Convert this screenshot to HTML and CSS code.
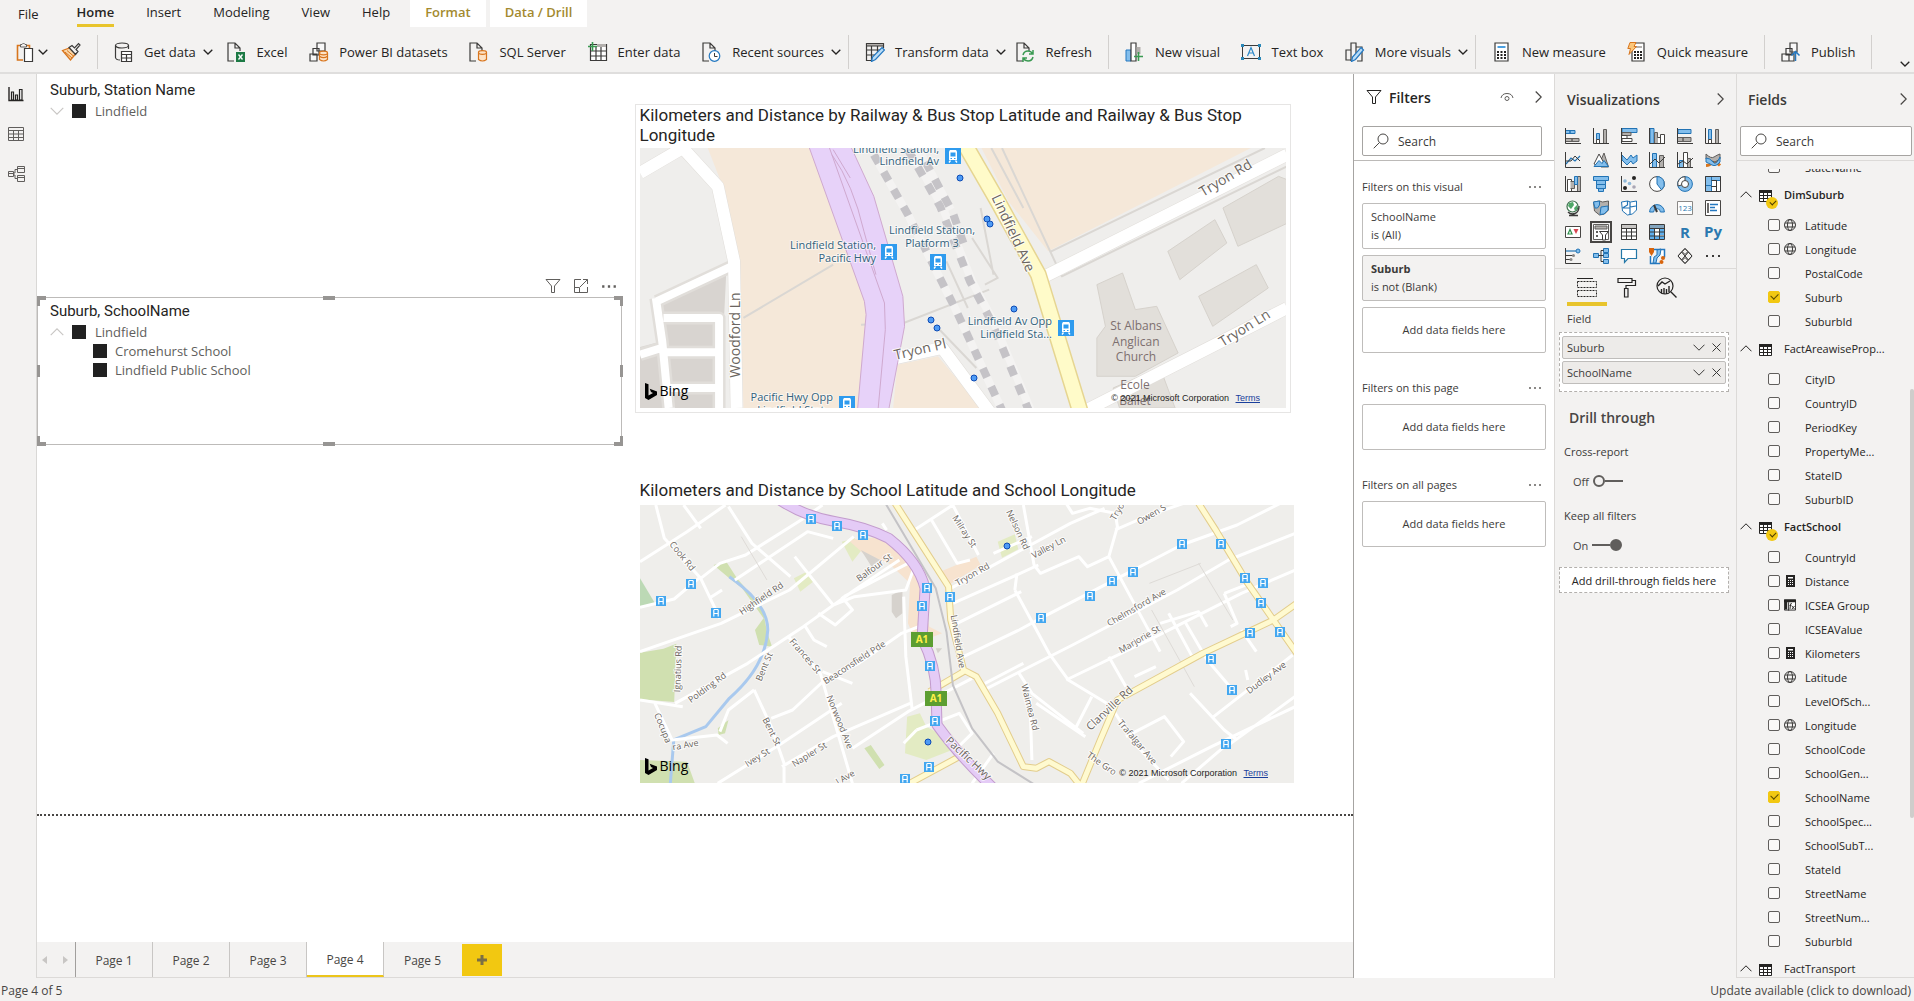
FILE: index.html
```html
<!DOCTYPE html>
<html lang="en">
<head>
<meta charset="utf-8">
<meta name="viewport" content="width=device-width, initial-scale=1">
<title>Report editor</title>
<link rel="stylesheet" href="styles.css">
</head>
<body>
<svg class="defs" aria-hidden="true">
  <symbol id="chev-down" viewBox="0 0 10 6"><path d="M.7.7 5 5 9.3.7" fill="none" stroke="currentColor" stroke-width="1.3"/></symbol>
  <symbol id="chev-up" viewBox="0 0 12 7"><path d="M.5 6.3 6 .8l5.500 5.500" fill="none" stroke="currentColor"/></symbol>
  <symbol id="chev-right" viewBox="0 0 7 12"><path d="M.7.5 6.200 6 .7 11.500" fill="none" stroke="currentColor" stroke-width="1.200"/></symbol>
  <symbol id="close" viewBox="0 0 9 9"><path d="M.5.5l8 8M8.500.5l-8 8" fill="none" stroke="currentColor"/></symbol>
  <symbol id="search" viewBox="0 0 16 16"><circle cx="10" cy="6" r="5" fill="none" stroke="currentColor"/><path d="M6.400 9.600.7 15.300" stroke="currentColor"/></symbol>
  <symbol id="funnel" viewBox="0 0 16 16"><path d="M1 1.500h14L9.500 8v6.500h-3V8z" fill="none" stroke="currentColor"/></symbol>
  <symbol id="dots" viewBox="0 0 14 4"><path d="M1 1h2v2H1zM6 1h2v2H6zM11 1h2v2h-2z" fill="currentColor"/></symbol>
  <symbol id="table" viewBox="0 0 13 12"><path d="M.5.5h12v11H.5z" fill="#fff" stroke="#252423"/><path d="M0 0h13v3H0z" fill="#252423"/><path d="M0 5.500h13M0 8.500h13M4.500 3v9M8.500 3v9" stroke="#252423"/></symbol>
  <symbol id="globe" viewBox="0 0 12 12"><g fill="none" stroke="#3b3a39"><circle cx="6" cy="6" r="5.500"/><ellipse cx="6" cy="6" rx="2.500" ry="5.500"/><path d="M1 4h10M1 8h10"/></g></symbol>
  <symbol id="calc" viewBox="0 0 12 12"><path d="M2 0h9v12H2z" fill="#252423"/><path d="M4 2h5v1.500H4zM4 5h1v1H4zM6 5h1v1H6zM8 5h1v1H8zM4 7h1v1H4zM6 7h1v1H6zM8 7h1v1H8zM4 9h1v1H4zM6 9h1v1H6zM8 9h1v1H8z" fill="#fff"/></symbol>
  <symbol id="calc-col" viewBox="0 0 13 12"><path d="M.5.500h12v11H.5z" fill="#fff" stroke="#252423"/><path d="M0 0h13v3H0zM1 3h2.500v8H1z" fill="#252423"/><path d="M5 3v9M8.500 4.500q-1.500-.7-1.500 1.500l-.5 4.500M6 6.500h2M8.500 7l3 3.500M11.500 7l-3 3.500" fill="none" stroke="#252423"/></symbol>
  <symbol id="doc" viewBox="0 0 14 20"><path d="M13 9V6L8 1H1v18h6M8 1v5h5" fill="none" stroke="#3b3a39" stroke-width="1.200"/></symbol>
  <symbol id="bus" viewBox="0 0 16 16"><path d="M0 0h16v16H0z" fill="#2f9bee"/><path d="M5 2h6l1 1.500V12H4V3.500z" fill="#fff"/><path d="M5.500 4.500h5v4h-5zM5.500 10h1.500v1H5.500zM9 10h1.500v1H9z" fill="#2f9bee"/><path d="M5.500 12.500 4 14.500M10.500 12.500l1.500 2" stroke="#fff" stroke-width="1.300"/></symbol>
  <symbol id="bing" viewBox="0 0 12 17"><path d="M0 0l3.500 1.200v11.300L8 10 6 9 4.700 5.800 12 8.500v3.600L3.500 17 0 15z" fill="#000"/></symbol>
  <defs><g id="stop"><path d="M0 0h10v10H0z" fill="#43a7f0"/><path d="M3 1.500h4M2.800 1.500v7M7.200 1.500v7M3 5.500h4" stroke="#fff" stroke-width="1.200"/></g></defs>
</svg>

<header class="ribbon">
  <nav class="menu" aria-label="Ribbon tabs">
    <button class="tab file">File</button>
    <button class="tab active">Home</button>
    <button class="tab">Insert</button>
    <button class="tab modeling">Modeling</button>
    <button class="tab">View</button>
    <button class="tab">Help</button>
    <button class="tab context">Format</button>
    <button class="tab context drill">Data / Drill</button>
  </nav>
  <div class="tools">
    <div class="group clip">
      <button aria-label="Paste"><svg width="18" height="20" viewBox="0 0 18 20"><path d="M7 18H1.500V3.500H5M10 3.500h3.500V6" fill="none" stroke="#d8751d" stroke-width="1.600"/><path d="M4.500 5V2.500H6q1.500-3 3 0h1.500V5z" fill="#f3f2f1" stroke="#605e5c"/><path d="M8.500 6.500h8v13h-8z" fill="#fff" stroke="#3b3a39" stroke-width="1.200"/></svg><svg class="cv"><use href="#chev-down"/></svg></button>
      <button aria-label="Format painter"><svg width="20" height="20" viewBox="0 0 20 20"><path d="M1.500 8.500l7-2.500 6 6-5 6z" fill="#fbd7a8" stroke="#d8751d" stroke-width="1.300"/><path d="M4 10l7 6M6 8.500l7 6" stroke="#d8751d"/><path d="M8 5.500l3-2 2.500 2.500 4-4.500 1.500 1.500-4 4.500 2 2-2.500 3z" fill="#f3f2f1" stroke="#3b3a39" stroke-width="1.200"/></svg></button>
    </div>
    <div class="group data">
      <button><svg width="20" height="20" viewBox="0 0 20 20"><g fill="none" stroke="#3b3a39" stroke-width="1.200"><ellipse cx="8" cy="3.500" rx="6.500" ry="2.500"/><path d="M1.500 3.500v12Q2 18 6 18M14.500 3.500V7"/><path d="M7.500 9.500h10v10h-10zM7.500 12.500h10M7.500 16h10M12.500 12.500v7" fill="#fff"/></g></svg>Get data<svg class="cv"><use href="#chev-down"/></svg></button>
      <button><svg width="20" height="20"><use href="#doc" width="14" height="20"/><path d="M9 10h9v10H9z" fill="#1d7a45"/><path d="M11.500 12.500l4 5M15.500 12.500l-4 5" stroke="#fff" stroke-width="1.300"/></svg>Excel</button>
      <button><svg width="20" height="20" viewBox="0 0 20 20"><g fill="#f8f8f8" stroke="#3b3a39" stroke-width="1.200"><path d="M8 1h8v8H8zM4 6.500h6V13H4zM1 12h7v7H1z"/></g><g fill="#fde3c6" stroke="#d8751d" stroke-width="1.200"><path d="M10.500 11v6.500q4 3 8 0V11"/><ellipse cx="14.500" cy="11" rx="4" ry="1.800"/><path d="M10.500 14.200q4 3 8 0" fill="none"/></g></svg>Power BI datasets</button>
      <button><svg width="20" height="20"><use href="#doc" width="14" height="20"/><path d="M9.500 10.500v7q4 3 8 0v-7" fill="#fde3c6" stroke="#d8751d" stroke-width="1.200"/><ellipse cx="13.500" cy="10.500" rx="4" ry="1.800" fill="#fde3c6" stroke="#d8751d" stroke-width="1.200"/></svg>SQL Server</button>
      <button><svg width="20" height="20" viewBox="0 0 20 20"><path d="M2.500 2.500h16v16h-16zM2.500 9h16M2.500 14h16M8 4v14.500M13 4v14.500" fill="#fff" stroke="#3b3a39" stroke-width="1.200"/><path d="M9 2h9v3H9z" fill="#b3b0ad"/><path d="M4.500 0v9M0 4.500h9" stroke="#3a9a52" stroke-width="1.600"/></svg>Enter data</button>
      <button><svg width="20" height="20"><use href="#doc" width="14" height="20"/><circle cx="12.500" cy="14" r="5.300" fill="#fff" stroke="#2478c0" stroke-width="1.200"/><path d="M12.500 11v3.500h3" fill="none" stroke="#3b3a39"/></svg>Recent sources<svg class="cv"><use href="#chev-down"/></svg></button>
    </div>
    <div class="group queries">
      <button><svg width="20" height="20" viewBox="0 0 20 20"><path d="M8 18.500H1.500v-17h17V6M1.500 8H15M1.500 13H11M6.500 4v14M12.500 4v7" fill="none" stroke="#3b3a39" stroke-width="1.200"/><path d="M1.500 1.500h17V4h-17z" fill="#b3b0ad" stroke="#3b3a39"/><path d="M17 5.500l2.500 2.500-9 9.500-4 2 1-4.500z" fill="#b9dcf6" stroke="#2478c0" stroke-width="1.200"/></svg>Transform data<svg class="cv"><use href="#chev-down"/></svg></button>
      <button><svg width="20" height="20"><use href="#doc" width="14" height="20"/><path d="M7 13q1-4 5-4 3 0 4.500 2.500M17 8v4h-4M17 15q-1 4-5 4-3 0-4.500-2.500M7 20v-4h4" fill="none" stroke="#3a9a52" stroke-width="1.500"/></svg>Refresh</button>
    </div>
    <div class="group insert">
      <button><svg width="20" height="20" viewBox="0 0 20 20"><path d="M1 8h5v11H1z" fill="#83beec" stroke="#2478c0"/><path d="M6 1h5v18H6z" fill="#fff" stroke="#3b3a39" stroke-width="1.200"/><path d="M11.500 5h4v7h-4z" fill="#b3b0ad"/><path d="M13.500 10v9M9 14.500h9" stroke="#3a9a52" stroke-width="1.600"/></svg>New visual</button>
      <button><svg width="20" height="20" viewBox="0 0 20 20"><path d="M1.500 3.500h17v13h-17z" fill="none" stroke="#3b3a39"/><path d="M0 2h3v3H0zM17 2h3v3h-3zM0 15h3v3H0zM17 15h3v3h-3z" fill="#2b88b8"/><path d="M6.500 14 10 5.500l3.500 8.500M7.800 11h4.400" fill="none" stroke="#2b88c8" stroke-width="1.200"/></svg>Text box</button>
      <button><svg width="20" height="20" viewBox="0 0 20 20"><path d="M6 18H1V8h5v11M6 8V1h5v10M11 5h6v14h-5" fill="none" stroke="#3b3a39" stroke-width="1.200"/><path d="M16 5.500l2.500 2.500-8 9.500-4 2 1-4.500z" fill="#b9dcf6" stroke="#2478c0" stroke-width="1.200"/></svg>More visuals<svg class="cv"><use href="#chev-down"/></svg></button>
    </div>
    <div class="group calcs">
      <button><svg width="20" height="20" viewBox="0 0 20 20"><path d="M3 1h13v18H3z" fill="#fff" stroke="#3b3a39" stroke-width="1.200"/><path d="M5.500 4h8v2h-8z" fill="#4ba0e0"/><path d="M5 9h2v2H5zM8.500 9h2v2h-2zM12 9h2v2h-2zM5 12h2v2H5zM8.500 12h2v2h-2zM12 12h2v2h-2zM5 15h2v2H5zM8.500 15h2v2h-2zM12 15h2v2h-2z" fill="#252423"/></svg>New measure</button>
      <button><svg width="20" height="20" viewBox="0 0 20 20"><path d="M5 1h12v18H5z" fill="#fff" stroke="#3b3a39" stroke-width="1.200"/><path d="M9 4h6v2H9z" fill="#b3b0ad"/><path d="M7 9h2v2H7zM10 9h2v2h-2zM13 9h2v2h-2zM7 12h2v2H7zM10 12h2v2h-2zM13 12h2v2h-2zM7 15h2v2H7zM10 15h2v2h-2zM13 15h2v2h-2z" fill="#252423"/><path d="M3 .5h6L7 4.500h2.500L2 12.500l1.500-6H.8z" fill="#fbc67a" stroke="#d8751d"/></svg>Quick measure</button>
    </div>
    <div class="group share">
      <button><svg width="20" height="20" viewBox="0 0 20 20"><g fill="#f8f8f8" stroke="#3b3a39" stroke-width="1.200"><path d="M9 1h7v9H9zM5 6.500h6V13H5zM1 12h7v7H1zM8 12h5v7H8z"/></g><path d="M14.500 19V9.500M10.500 13.500l4-4 4 4" fill="none" stroke="#2478c0" stroke-width="1.500"/></svg>Publish</button>
    </div>
    <button class="collapse" aria-label="Collapse ribbon"><svg class="cv"><use href="#chev-down"/></svg></button>
  </div>
</header>

<div class="workspace">
  <nav class="rail" aria-label="Views">
    <button aria-label="Report"><svg width="16" height="16" viewBox="0 0 16 16"><path d="M1 1v13.500h14.500" fill="none" stroke="#252423" stroke-width="1.400"/><path d="M3.500 6h2v8h-2zM7.500 9h2v5h-2zM11.500 3.500h2.500V14h-2.500z" fill="none" stroke="#252423" stroke-width="1.200"/></svg></button>
    <button aria-label="Data"><svg width="16" height="16" viewBox="0 0 16 16"><path d="M.5 1.500h15v13H.5zM.5 4.500h15M.5 8h15M.5 11.500h15M5.500 4.500v10M10.500 4.500v10" fill="none" stroke="#605e5c"/></svg></button>
    <button aria-label="Model"><svg width="18" height="18" viewBox="0 0 18 18"><path d="M9.500 1.500h7v6h-7zM9.500 3.500h7M9.500 10.500h7v6h-7zM9.500 12.500h7M.5 6.500h5v5h-5zM.5 8.500h5M5.500 8H7V4.500h2.500M5.500 10H7v3.500h2.500" fill="none" stroke="#605e5c"/></svg></button>
  </nav>

  <div class="center">
    <main class="canvas">
      <div class="column">
        <section class="slicer first">
          <h2>Suburb, Station Name</h2>
          <div class="node"><svg class="ex flip"><use href="#chev-up"/></svg><input type="checkbox" id="s1" checked><label for="s1">Lindfield</label></div>
        </section>
        <div class="visual-tools">
          <button aria-label="Filters"><svg width="16" height="16"><use href="#funnel"/></svg></button>
          <button aria-label="Focus mode"><svg width="16" height="16" viewBox="0 0 16 16"><path d="M8 1.500H1.500v13h13V9M1.500 9.500h5v5M7 9l7.500-7.500M10 1.500h4.500V6" fill="none" stroke="currentColor"/></svg></button>
          <button aria-label="More options"><svg width="16" height="5"><use href="#dots"/></svg></button>
        </div>
        <section class="slicer selected">
          <h2>Suburb, SchoolName</h2>
          <div class="node"><svg class="ex"><use href="#chev-up"/></svg><input type="checkbox" id="s2" checked><label for="s2">Lindfield</label></div>
          <div class="node child"><input type="checkbox" id="s3" checked><label for="s3">Cromehurst School</label></div>
          <div class="node child"><input type="checkbox" id="s4" checked><label for="s4">Lindfield Public School</label></div>
          <i class="h tl"></i><i class="h tc"></i><i class="h tr"></i><i class="h ml"></i><i class="h mr"></i><i class="h bl"></i><i class="h bc"></i><i class="h br"></i>
        </section>
      </div>

      <div class="column">
        <section class="mapcard hovered">
          <h2>Kilometers and Distance by Railway &amp; Bus Stop Latitude and Railway &amp; Bus Stop Longitude</h2>
          <div class="map">
            <svg class="tiles" viewBox="0 0 647 260" preserveAspectRatio="xMinYMin slice">
              <path d="M0 0h660v280H0z" fill="#efeeec"/>
              <g class="geo" transform="scale(.4274 .3333) translate(-23 -160)">
                <g fill="#f5e8d9"><path d="M180 155h250l125 485-20 300H265L255 500 215 270z"/><path d="M820 155h640L978 470 885 320z"/><path d="M625 810l95-25 105 160H615z"/></g>
                <path d="M23 760l60-20M265 670l210-160M540 690l100-5 200-100M870 160L1010 545l527-330M985 470l500-310M845 160l75 180M720 700l90 120M740 500l50 140M800 430l60 120-30 20M820 340l30 200" fill="none" stroke="#dad7d3" stroke-width="2"/>
                <g fill="#d8d4d0"><path d="M70 620l155-90-5 130H78zM78 685h125v80H88zM88 785h112v85H95zM98 890h100v60h-92zM23 785l42-20 22 180H23z"/></g>
                <g class="bld"><path d="M1387 340l130-95 30 15v120l-125 75zM1258 470l110-95 28 70-110 110zM1330 605l135-95 28 70-130 115z"/><path d="M1092 570l60-35 30 110 50-10 50 140-100 70h-90V730l20-35zM1130 880l110-60 35 120h-130z"/></g>
                <g class="casing"><path d="M23 235l100-75 82 115 38 225 6 440M23 780l50-20M62 620l175-105M60 610l15 130 15 200M78 670h130v270M85 773h120M92 880h110M955 555l582-375M1537 640l-490 320M605 795l125-35 110 190" stroke-width="13" stroke="#e1deda"/></g>
                <g class="casing"><path d="M23 235l100-75 82 115 38 225 6 440M955 555l582-375M1537 640l-490 320M605 795l125-35 110 190" stroke-width="12" stroke="#fff"/><path d="M23 780l50-20M62 620l175-105M60 610l15 130 15 200M78 670h130v270M85 773h120M92 880h110" stroke-width="8" stroke="#fff"/></g>
                <path d="M418 155h98l54 150 68 300 4 90-37 250h-73l20-285-4-40z" fill="#e7d2f9" stroke="#cfa9cf" stroke-width="1"/>
                <path d="M465 155l130 470 2 80-17 240M472 180q50 90 75 230l28 130M475 165l40 85" fill="none" stroke="#cfa9cf" stroke-width="1"/>
                <g fill="none" stroke="#f4f3f2" stroke-width="8"><path d="M570 180l80 180 110 280 115 320M655 165l75 170 70 225 50 120 95 290M675 165l75 180"/></g>
                <g fill="none" stroke="#c5c3c7" stroke-width="8" stroke-dasharray="10 10"><path d="M570 180l80 180 110 280 115 320"/><path d="M650 165l75 170 70 225 50 120 95 290"/><path d="M680 175l75 180 30 110" stroke-dashoffset="10"/></g>
                <path d="M770 120l90 200 95 220 105 440" fill="none" stroke="#e6d591" stroke-width="17"/>
                <path d="M770 120l90 200 95 220 105 440" fill="none" stroke="#fffbc9" stroke-width="14"/>
              </g>
              <g class="poi">
                <text x="299" y="5" class="end">Lindfield Station,</text><text x="299" y="17" class="end">Lindfield Av</text>
                <text x="292" y="86" class="mid">Lindfield Station,</text><text x="292" y="99" class="mid">Platform 3</text>
                <text x="236" y="101" class="end">Lindfield Station,</text><text x="236" y="114" class="end">Pacific Hwy</text>
                <text x="412" y="177" class="end">Lindfield Av Opp</text><text x="412" y="190" class="end">Lindfield Sta...</text>
                <text x="193" y="253" class="end">Pacific Hwy Opp</text><text x="193" y="266" class="end">Lindfield Stat...</text>
              </g>
              <g class="place"><text x="496" y="182">St Albans</text><text x="496" y="198">Anglican</text><text x="496" y="213">Church</text><text x="495" y="241">Ecole</text><text x="495" y="257">Ballet</text></g>
              <g class="road big">
                <text transform="translate(369 87) rotate(65)">Lindfield Ave</text>
                <text transform="translate(588 34) rotate(-31)">Tryon Rd</text>
                <text transform="translate(607 184) rotate(-32)">Tryon Ln</text>
                <text transform="translate(100 187) rotate(-90)">Woodford Ln</text>
                <text transform="translate(281 206) rotate(-13)">Tryon Pl</text>
              </g>
              <use href="#bus" x="305" y="0" width="16" height="16"/><use href="#bus" x="241" y="96" width="16" height="16"/><use href="#bus" x="290" y="106" width="16" height="16"/><use href="#bus" x="418" y="172" width="16" height="16"/><use href="#bus" x="199" y="248" width="16" height="16"/>
              <g class="pt"><circle cx="320" cy="30" r="3"/><circle cx="347" cy="71" r="3"/><circle cx="350" cy="76" r="3"/><circle cx="374" cy="161" r="3"/><circle cx="291" cy="172" r="3"/><circle cx="297" cy="180" r="3"/><circle cx="334" cy="230" r="3"/></g>
            </svg>
            <span class="bing"><svg width="12" height="17"><use href="#bing"/></svg>Bing</span>
            <span class="legal">© 2021 Microsoft Corporation <a href="#terms">Terms</a></span>
          </div>
        </section>

        <section class="mapcard second">
          <h2>Kilometers and Distance by School Latitude and School Longitude</h2>
          <div class="map tall">
            <svg class="tiles" viewBox="0 0 655 278" preserveAspectRatio="xMinYMin slice">
              <path d="M0 0h670v300H0z" fill="#efeeeb"/>
              <g class="geo" transform="scale(.4274 .3333) translate(-23 -105)">
                <g fill="#d0e0b0"><path d="M23 548l55-12 30-15-5 175-80-8zM195 285l30-10 25 50 60 90 10 70 12 45-30-5-10-45 20-35-50-90-30-30zM548 835l15-10 32 60-12 12zM205 775l25-25-8 40-15 5zM23 870l110 5 18 64H23z"/></g>
                <path d="M23 325l35 75-35 10z" fill="#bcd9b5"/>
                <g fill="#e3ebc3"><path d="M495 215l30-10 20 30-25 40zM383 325l30-20 15 30-30 30zM860 215l40-22 8 45-38 25zM648 740l30-10 15 40 45 30 15 40-60 30-50-20z"/></g>
                <g fill="#f7e3cf"><path d="M510 210l80-10 75 80 35 190 30 20-60 30-20-60 5-120-50-60-60-30zM725 305l85-45 10 25-75 60z"/></g>
                <path d="M540 240l45 30-20 20zM612 375l25-15v70l-15 15-10-20zM715 535l15 0-10 15z" fill="#d6d2cd"/>
                <path d="M232 320q90 80 90 160-5 110-90 205l-55 85-75 40-8 130" fill="none" stroke="#a9c9ee" stroke-width="3"/>
                <g fill="none" stroke="#fff" stroke-width="3">
                  <path d="M23 275l110-90 90-80M60 105l20 100 85 120 45 120M125 105l40 70M165 325l45-45 60-25 130-105 50-45M245 330l170-145 60 20M230 110l55 110 90 100M23 545l190-85 160-100 150-160M23 412l80-25 60-65M185 385l30-25M385 260l90 145 50-25 120-20 20-70M440 430l40 35 40-45-25-40M105 700l170-120 130-110 120-110 105-90M410 470l20 40 30 20M370 500l75 110 75 330M23 690l100 20M58 700l40 110 105-15 25 25M290 660l40 110 30 110v60M290 660l-60 60-20 65M330 745l50-25 75-90 80-50 100-90 40-20M450 605l70 35M205 940l150-120 140-120M355 890l120-90 180-100M520 835l130-110 150-100M640 380l5 180 15 160M500 380l150-100"/>
                  <path d="M665 180l90-75M705 150l60 130 30-10M755 105l60 150M750 355l280-195 80-45M850 250l90-50M920 105l25 180 15 25 90-50 20 30 50-30 20-90-5-40-60-15-40 15-15-30M1120 260l120 285M1135 180l80-45 80-35M755 400l150-85 50-30M765 460l150-95M900 360l5-50M780 560l130-80 50-35 180-120 150-100 130-60 140-90M900 360l80 190 45 80 90 70M835 655l200-130 245-165 120-90 156-80M910 610l30 60 120 120M935 680l5 190M1020 630l210-130 200-130 126-70M1120 560l40 90M1260 430l55 130M1240 460l90-35 20 45M1390 370l30 90-15 10M1390 370l60-30M1300 460l50 110 60 90M1310 670l80 110 30 30M1360 745l190-190M1440 600l5 30M1190 940l170-110 196-120M1040 780l40-100M1120 700l60 120 80 110M1160 800l90-60 45 75-30 45M950 700l115 100M1180 620l50-30M1430 480l35 65M1395 830l160-150M800 940l50-90M830 640l90-60M670 780l100-50 30 60-40 50M640 820l30-40M590 160l10 20M1290 940l100-110"/>
                </g>
                <path d="M1220 420l100 230M1330 280l80 170M1215 340l120-60M260 200l60 130" fill="none" stroke="#dedbd7" stroke-width="1"/>
                <g class="casing"><path d="M615 90l45 90 85 170 5 100 30 150 30 20 50 110 60 160 30 5 30-20 50 35 25 40 45-140 40-120 200-140 165-100 55-50M1325 90l45 90 75 160 60 110 60 110M780 605l-80 60M640 950l130-90" stroke="#e3cd8c" stroke-width="7"/></g>
                <g class="casing"><path d="M615 90l45 90 85 170 5 100 30 150 30 20 50 110 60 160 30 5 30-20 50 35 25 40 45-140 40-120 200-140 165-100 55-50M1325 90l45 90 75 160 60 110 60 110M780 605l-80 60M640 950l130-90" stroke="#fffad0" stroke-width="5"/></g>
                <path d="M595 95l120 260 25 130 15 160 45 130 60 100 100 80" fill="none" stroke="#c4c3c6" stroke-width="2"/>
                <g class="casing"><path d="M350 90q60 50 130 65t125 50q70 70 85 150l-7 150q35 90 33 180l2 80q50 90 140 200" stroke="#c39ccd" stroke-width="11"/></g>
                <g class="casing"><path d="M350 90q60 50 130 65t125 50q70 70 85 150l-7 150q35 90 33 180l2 80q50 90 140 200" stroke="#e4cbf6" stroke-width="9"/></g>
              </g>
              <g class="road">
                <text transform="translate(40 53) rotate(51)">Cook Rd</text><text transform="translate(123 96) rotate(-34)">Highfield Rd</text>
                <text transform="translate(236 65) rotate(-36)">Balfour St</text><text transform="translate(322 28) rotate(57)">Milray St</text>
                <text transform="translate(375 26) rotate(65)">Nelson Rd</text><text transform="translate(410 45) rotate(-28)">Valley Ln</text>
                <text transform="translate(334 72) rotate(-30)">Tryon Rd</text><text transform="translate(480 8) rotate(-60)">Tryo</text>
                <text transform="translate(513 12) rotate(-30)">Owen S</text><text transform="translate(41 164) rotate(-88)">Ignatius Rd</text>
                <text transform="translate(69 185) rotate(-36)">Polding Rd</text><text transform="translate(127 163) rotate(-67)">Bent St</text>
                <text transform="translate(163 153) rotate(49)">Frances St</text><text transform="translate(216 160) rotate(-33)">Beaconsfield Pde</text>
                <text transform="translate(197 218) rotate(68)">Norwood Ave</text><text transform="translate(129 228) rotate(63)">Bent St</text>
                <text transform="translate(20 224) rotate(68)">Cocupa</text><text transform="translate(46 243) rotate(-10)">ra Ave</text>
                <text transform="translate(119 255) rotate(-32)">Ivey St</text><text transform="translate(171 252) rotate(-32)">Napier St</text>
                <text transform="translate(207 275) rotate(-32)">l Ave</text><text transform="translate(315 137) rotate(81)">Lindfield Ave</text>
                <text transform="translate(387 203) rotate(76)">Waimea Rd</text><text transform="translate(498 105) rotate(-30)">Chelmsford Ave</text>
                <text transform="translate(501 137) rotate(-30)">Marjorie St</text><text transform="translate(628 175) rotate(-37)">Dudley Ave</text>
                <text transform="translate(495 239) rotate(50)">Trafalgar Ave</text><text transform="translate(460 261) rotate(35)">The Gro</text>
                <text class="mdm" transform="translate(472 206) rotate(-43)">Clanville Rd</text><text class="mdm" transform="translate(326 256) rotate(43)">Pacific Hwy</text>
              </g>
              <g class="stops">
                <use href="#stop" x="166" y="9"/><use href="#stop" x="192" y="16"/><use href="#stop" x="218" y="25"/><use href="#stop" x="46" y="74"/><use href="#stop" x="16" y="91"/><use href="#stop" x="71" y="103"/><use href="#stop" x="282" y="78"/><use href="#stop" x="305" y="87"/><use href="#stop" x="277" y="96"/><use href="#stop" x="285" y="156"/><use href="#stop" x="290" y="211"/><use href="#stop" x="284" y="257"/><use href="#stop" x="260" y="269"/><use href="#stop" x="537" y="34"/><use href="#stop" x="576" y="34"/><use href="#stop" x="488" y="62"/><use href="#stop" x="467" y="71"/><use href="#stop" x="445" y="86"/><use href="#stop" x="396" y="108"/><use href="#stop" x="600" y="68"/><use href="#stop" x="618" y="73"/><use href="#stop" x="616" y="93"/><use href="#stop" x="605" y="123"/><use href="#stop" x="635" y="122"/><use href="#stop" x="566" y="149"/><use href="#stop" x="587" y="180"/><use href="#stop" x="581" y="234"/>
              </g>
              <g class="shield"><path d="M271 127h22v15h-22zM285 186h22v15h-22z"/><text x="282" y="138">A1</text><text x="296" y="197">A1</text></g>
              <g class="pt"><circle cx="367" cy="41" r="3"/><circle cx="288" cy="237" r="3"/></g>
            </svg>
            <span class="bing"><svg width="12" height="17"><use href="#bing"/></svg>Bing</span>
            <span class="legal">© 2021 Microsoft Corporation <a href="#terms">Terms</a></span>
          </div>
        </section>
      </div>
    </main>
    <nav class="pages" aria-label="Pages">
      <div class="pager"><button aria-label="Previous page"><svg width="5" height="8"><path d="M5 0v8L0 4z" fill="#c8c6c4"/></svg></button><button aria-label="Next page"><svg width="5" height="8"><path d="M0 0v8l5-4z" fill="#c8c6c4"/></svg></button></div>
      <button class="page">Page 1</button><button class="page">Page 2</button><button class="page">Page 3</button><button class="page current">Page 4</button><button class="page">Page 5</button>
      <button class="add" aria-label="New page"><svg width="12" height="12"><path d="M6 1v10M1 6h10" stroke="#7a6f45" stroke-width="3"/></svg></button>
    </nav>
  </div>

  <aside class="filters">
    <header><svg width="16" height="16"><use href="#funnel"/></svg><h2>Filters</h2>
      <button aria-label="Show filters"><svg width="14" height="10" viewBox="0 0 14 10"><path d="M1 6q1-4.500 6-4.500T13 6" fill="none" stroke="#605e5c"/><circle cx="7" cy="6.500" r="2" fill="none" stroke="#605e5c"/></svg></button>
      <button aria-label="Collapse"><svg width="7" height="12"><use href="#chev-right"/></svg></button></header>
    <div class="searchrow"><label class="search"><svg width="16" height="16"><use href="#search"/></svg><input type="search" placeholder="Search" aria-label="Search filters"></label></div>
    <section><h3>Filters on this visual<button aria-label="More"><svg width="14" height="4"><use href="#dots"/></svg></button></h3>
      <button class="card">SchoolName<span>is (All)</span></button>
      <button class="card applied"><b>Suburb</b><span>is not (Blank)</span></button>
      <div class="card drop">Add data fields here</div></section>
    <section><h3>Filters on this page<button aria-label="More"><svg width="14" height="4"><use href="#dots"/></svg></button></h3><div class="card drop">Add data fields here</div></section>
    <section><h3>Filters on all pages<button aria-label="More"><svg width="14" height="4"><use href="#dots"/></svg></button></h3><div class="card drop">Add data fields here</div></section>
  </aside>

  <aside class="viz">
    <header><h2>Visualizations</h2><button aria-label="Collapse"><svg width="7" height="12"><use href="#chev-right"/></svg></button></header>
    <div class="gallery">
      <button aria-label="Stacked bar chart"><svg viewBox="0 0 16 16"><path class="b" d="M1 2.500h4v3H1M5 2.500h5v3H5z"/><path class="g" d="M1 10.500h6v3H1M7 10.500h7v3H7z"/><path class="k" d="M.5 0v15.500H16"/></svg></button>
      <button aria-label="Stacked column chart"><svg viewBox="0 0 16 16"><path class="b" d="M3.500 5.500h3v6h-3z"/><path class="w" d="M3.500 11.500h3v4h-3z"/><path class="g" d="M10.500 1.500h3v14h-3z"/><path class="k" d="M.5 0v15.500H16"/></svg></button>
      <button aria-label="Clustered bar chart"><svg viewBox="0 0 16 16"><path class="b" d="M1 .5h15v4H1z"/><path class="g" d="M1 4.500h9v3H1z"/><path class="w" d="M1 7.500h5v3H1M1 10.500h10v3H1z"/><path class="k" d="M.5 0v15.500H16"/></svg></button>
      <button aria-label="Clustered column chart"><svg viewBox="0 0 16 16"><path class="b" d="M1 .5h4v15H1z"/><path class="g" d="M5.500 4.500h3v11h-3z"/><path class="w" d="M8.500 9.500h3v6h-3M11.500 6.500h4v9h-4z"/><path class="k" d="M.5 0v15.500H16"/></svg></button>
      <button aria-label="100% stacked bar chart"><svg viewBox="0 0 16 16"><path class="b" d="M1 1.500h13v4H1z"/><path class="g" d="M1 9.500h5v4H1M6 9.500h8v4H6z"/><path class="k" d="M.5 0v15.500H16"/></svg></button>
      <button aria-label="100% stacked column chart"><svg viewBox="0 0 16 16"><path class="b" d="M3.500 1.500h3v10h-3z"/><path class="w" d="M3.500 11.500h3v4h-3z"/><path class="g" d="M10.500 1.500h3v14h-3z"/><path class="k" d="M.5 0v15.500H16"/></svg></button>

      <button aria-label="Line chart"><svg viewBox="0 0 16 16"><path class="l" d="M1 12l5-6 4 3 5-5"/><path class="k" d="M1 9l5 0 4-5 5 5M.5 0v15.500H16"/></svg></button>
      <button aria-label="Area chart"><svg viewBox="0 0 16 16"><path class="g" d="M8 8l3-7 4.500 14H8z"/><path class="w" d="M1 12L6 2l5 9-4 3z"/><path class="b" d="M1 14.500l5-6 3 3 2-3 4.500 6z"/></svg></button>
      <button aria-label="Stacked area chart"><svg viewBox="0 0 16 16"><path class="b" d="M1 3l5 5 4-5 2 3 4-3v6l-4 3-2-3-4 4-5-5z"/><path class="k" d="M.5 0v15.500H16"/></svg></button>
      <button aria-label="Line and stacked column chart"><svg viewBox="0 0 16 16"><path class="b" d="M3.500 1.500h4v14h-4z"/><path class="g" d="M10.500 3.500h4v12h-4z"/><path class="k" d="M.5 0v15.500H16M1 12l5-5 4 4 6-6"/></svg></button>
      <button aria-label="Line and clustered column chart"><svg viewBox="0 0 16 16"><path class="b" d="M2.500 8.500h4v7h-4z"/><path class="w" d="M6.500.5h4v15h-4z"/><path class="g" d="M10.500 6.500h3v9h-3z"/><path class="k" d="M.5 0v15.500H16M1 12l5-3 4 3 6-6"/></svg></button>
      <button aria-label="Ribbon chart"><svg viewBox="0 0 16 16"><path d="M1 13.500q4 0 6-3t8 3" fill="none" stroke="#d8751d" stroke-width="3"/><path class="g" d="M1 2q5 5 8 3t6-3v5l-5 3-9-3z"/><path class="b" d="M1 6q4 0 7 4t7-5v5q-4 5-8 3T1 10z"/></svg></button>

      <button aria-label="Waterfall chart"><svg viewBox="0 0 16 16"><path class="w" d="M2.500 3.500h4v12h-4z"/><path class="g" d="M5.500 5.500h4v7h-4M12.500.5h3v15h-3z"/><path class="b" d="M9.500.5h3v8h-3z"/><path class="k" d="M.5 0v15.500H16"/></svg></button>
      <button aria-label="Funnel chart"><svg viewBox="0 0 16 16"><path class="b" d="M.5.500h15v4H.5zM3.500 4.500h9v4h-9zM3.500 8.500h9v4h-9zM5.500 12.500h5v3h-5z"/></svg></button>
      <button aria-label="Scatter chart"><svg viewBox="0 0 16 16"><path class="k" d="M.5 0v15.500H16"/><circle cx="13" cy="2" r="2" fill="#252423"/><circle cx="4" cy="12" r="2" fill="#252423"/><circle cx="4" cy="5" r="1.800" fill="#8fb8d8"/><circle cx="8.500" cy="7.500" r="1.800" fill="#8fb8d8"/><circle cx="13" cy="11" r="1.800" fill="#a9a6b4"/></svg></button>
      <button aria-label="Pie chart"><svg viewBox="0 0 16 16"><circle class="w" cx="8" cy="8" r="7.400"/><path class="b" d="M8 .6a7.400 7.400 0 0 1 4.500 13.200L8 8z"/></svg></button>
      <button aria-label="Donut chart"><svg viewBox="0 0 16 16"><circle class="b" cx="8" cy="8" r="7.400"/><path class="w" d="M8 .6V8L1 10A7.400 7.400 0 0 1 8 .6z"/><circle class="w" cx="8" cy="8" r="3.500"/></svg></button>
      <button aria-label="Treemap"><svg viewBox="0 0 16 16"><path class="w" d="M.5.500h15v15H.5z"/><path class="b" d="M.5.500h6v9h-6zM.5 9.500h6v6h-6zM6.500.5h9v4h-9z"/><path class="k" d="M6.500 4.500h5v6h-5M11.500 4.500v11M6.500 10.500h5M.5.500h15v15H.5z"/></svg></button>

      <button aria-label="Map"><svg viewBox="0 0 16 16"><path d="M3 12q3 3 7 1.500T14 6M4 15.500h9M8.500 13v3" fill="none" stroke="#3b3a39" stroke-width="1.400"/><circle cx="7.500" cy="6.500" r="5.500" fill="#fff" stroke="#3b6f4b" stroke-width="1.200"/><path d="M4 3l4-1 1 3-3 4-3-3zM9 8l3-3v4l-2 2z" fill="#4fa868"/></svg></button>
      <button aria-label="Filled map"><svg viewBox="0 0 16 16"><path class="g" d="M.5 2l6-1 3 1 6-1v9l-4 4-5 1-5-4z"/><path class="b" d="M.5 2l6-1v4l-2 3H2zM8 7l7-1v4l-4 4-4 .5z"/></svg></button>
      <button aria-label="Shape map"><svg viewBox="0 0 16 16"><path d="M.5 2l6-1 3 1 6-1v9l-4 4-5 1-5-4z" fill="#fff" stroke="#2273b4"/><path class="l" d="M6.500 1v4l-5 3M9 2v5l6-1M6 8l3 0 0 6M2 8l4 0"/></svg></button>
      <button aria-label="Gauge"><svg viewBox="0 0 16 16"><path class="b" d="M.6 12a7.400 7.400 0 0 1 14.800 0h-4a3.400 3.400 0 0 0-6.800 0z"/><path class="k" d="M8 12l-3-7" stroke-width="2"/></svg></button>
      <button aria-label="Card"><svg viewBox="0 0 16 16"><path d="M.5 1.500h15v13H.5z" fill="#fff" stroke="#8a8886"/><text class="ic n" x="8" y="11">123</text></svg></button>
      <button aria-label="Multi-row card"><svg viewBox="0 0 16 16"><path class="w" d="M.5.500h15v15H.5z"/><path d="M3 3v10" stroke="#3b3a39" stroke-width="1.500"/><path d="M5 4.500h8M5 7.500h5M5 10.500h7" stroke="#2478c0" stroke-width="1.600"/></svg></button>

      <button aria-label="KPI"><svg viewBox="0 0 16 16"><path class="w" d="M.5 2.500h15v11H.5z"/><path d="M5 5.500l2 4.500H3z" fill="none" stroke="#2f8f4b" stroke-width="1.200"/><path d="M8.500 5h5L11 10z" fill="#d64550"/></svg></button>
      <button class="picked" aria-label="Slicer"><svg viewBox="0 0 16 16"><path d="M.5.500h15v15H.5z" fill="#fff" stroke="#605e5c"/><path d="M2 2h12v3H2z" fill="#b3b0ad" stroke="#605e5c"/><path d="M3 7h2v2H3zM3 11h2v2H3z" fill="#605e5c"/><path d="M6.500 7.500h9L12.500 11v5h-3v-5z" fill="#fff" stroke="#3b3a39"/></svg></button>
      <button aria-label="Table"><svg viewBox="0 0 16 16"><path class="w" d="M.5.500h15v15H.5z"/><path d="M1 1h14v3H1z" fill="#c8c6c4"/><path class="k" d="M.5.500h15v15H.5zM.5 4.500h15M.5 8h15M.5 12h15M5.500 4v11M10.500 4v11"/></svg></button>
      <button aria-label="Matrix"><svg viewBox="0 0 16 16"><path d="M.5.500h15v15H.5z" fill="#fff"/><path d="M1 4h4v11H1zM10 4h5v4h-5zM5 12h10v3H5zM10 8h5v3h-5z" fill="#5fb0ee"/><path d="M1 1h14v3H1z" fill="#83a5bf"/><path class="k" d="M.5.500h15v15H.5zM.5 4.500h15M.5 8h15M.5 12h15M5.500 4v11M10.500 4v11"/></svg></button>
      <button aria-label="R script visual"><svg viewBox="0 0 16 16"><text class="ic" x="8" y="14">R</text></svg></button>
      <button aria-label="Python visual"><svg viewBox="0 0 16 16"><text class="ic" x="8" y="13">Py</text></svg></button>

      <button aria-label="Key influencers"><svg viewBox="0 0 16 16"><path class="k" d="M.5 0v15.500H16M1 7.500h7M1 11.500h5"/><path class="l" d="M1 3h10"/><circle class="b" cx="13" cy="3" r="2"/><circle cx="8.500" cy="7.500" r="1.500" fill="#8a8886"/><circle cx="6" cy="11.500" r="1.500" fill="#8a8886"/></svg></button>
      <button aria-label="Decomposition tree"><svg viewBox="0 0 16 16"><path class="b" d="M.5 5.500h5v4h-5zM10.500.5h5v4h-5zM10.500 5.500h5v4h-5zM10.500 11.500h5v4h-5z"/><path class="k" d="M5.500 7.500h5M10.500 2.500H8v11h2.500"/></svg></button>
      <button aria-label="Q&amp;A"><svg viewBox="0 0 16 16"><path d="M.5 1.500h15v9H7l-3.500 4v-4h-3z" fill="#fff" stroke="#2478a8" stroke-width="1.200"/></svg></button>
      <button aria-label="ArcGIS map"><svg viewBox="0 0 16 16"><path d="M5 1.500h10.500v8M1.500 8v7.500H11" fill="#fff" stroke="#2478c0" stroke-width="1.500"/><path class="b" d="M8 2l4-1-1 6-3 3-1 5H4l1-6 3-2z"/><path d="M0 0h5v4L2.500 8 0 4z" fill="#d8640c"/><circle cx="14" cy="10" r="2" fill="#d8640c"/><circle cx="12.500" cy="14" r="2" fill="#d8640c"/></svg></button>
      <button aria-label="Power Apps"><svg viewBox="0 0 16 16"><path d="M5 3.500 8 .5l3 3-3 3zM1 8l3.500-4L8 8l-3.500 4zM8 8l3.500-4L15 8l-3.500 4zM5 12.500l3-3 3 3-3 3zM1 8l7 7.500M15 8 8 15.500M1 8l7-7.500L15 8" fill="none" stroke="#3b3a39"/></svg></button>
      <button aria-label="More visuals"><svg viewBox="0 0 16 16"><path d="M1 7h2v2H1zM7 7h2v2H7zM13 7h2v2h-2z" fill="#3b3a39"/></svg></button>
    </div>
    <div class="modes">
      <button class="on" aria-label="Fields"><svg width="22" height="22" viewBox="0 0 22 22"><path d="M1 1.500h16" stroke="#252423"/><path d="M1.500 4.500h19v6h-19zM1.500 13.500h19v6h-19z" fill="none" stroke="#252423" stroke-dasharray="2 1"/></svg></button>
      <button aria-label="Format"><svg width="20" height="22" viewBox="0 0 20 22"><path d="M1 1.500h14v4H1zM15 3.500h3.500v5H9v3M7.500 11.500h3.500V20H7.500z" fill="none" stroke="#252423" stroke-width="1.200"/></svg></button>
      <button aria-label="Analytics"><svg width="22" height="22" viewBox="0 0 22 22"><circle cx="9" cy="9" r="8" fill="none" stroke="#252423" stroke-width="1.200"/><path d="M15 15l5.500 5.500M2 9l4-4 3 2 5-3M5.500 16v-4M8 17v-6M10.500 17v-5M13 15V9" fill="none" stroke="#252423" stroke-width="1.400"/></svg></button>
    </div>
    <div class="wells">
      <h3>Field</h3>
      <div class="well">
        <div class="chip">Suburb<button aria-label="Suburb options"><svg width="12" height="7" class="flip"><use href="#chev-up"/></svg></button><button aria-label="Remove Suburb"><svg width="9" height="9"><use href="#close"/></svg></button></div>
        <div class="chip">SchoolName<button aria-label="SchoolName options"><svg width="12" height="7" class="flip"><use href="#chev-up"/></svg></button><button aria-label="Remove SchoolName"><svg width="9" height="9"><use href="#close"/></svg></button></div>
      </div>
      <h2>Drill through</h2>
      <h3 class="opt">Cross-report</h3>
      <label class="toggle">Off<input type="checkbox" role="switch"></label>
      <h3 class="opt">Keep all filters</h3>
      <label class="toggle">On<input type="checkbox" role="switch" checked></label>
      <div class="well empty">Add drill-through fields here</div>
    </div>
  </aside>

  <aside class="fields">
    <header><h2>Fields</h2><button aria-label="Collapse"><svg width="7" height="12"><use href="#chev-right"/></svg></button></header>
    <div class="searchrow"><label class="search"><svg width="16" height="16"><use href="#search"/></svg><input type="search" placeholder="Search" aria-label="Search fields"></label></div>
    <div class="list">
      <div class="rows">
        <label class="row"><input type="checkbox"><i></i>StateName</label>
        <h3 class="used"><svg class="up"><use href="#chev-up"/></svg><span class="tb"><svg width="13" height="12"><use href="#table"/></svg><em></em></span>DimSuburb</h3>
        <label class="row"><input type="checkbox"><i><svg><use href="#globe"/></svg></i>Latitude</label>
        <label class="row"><input type="checkbox"><i><svg><use href="#globe"/></svg></i>Longitude</label>
        <label class="row"><input type="checkbox"><i></i>PostalCode</label>
        <label class="row"><input type="checkbox" checked><i></i>Suburb</label>
        <label class="row"><input type="checkbox"><i></i>SuburbId</label>
        <h3><svg class="up"><use href="#chev-up"/></svg><span class="tb"><svg width="13" height="12"><use href="#table"/></svg></span>FactAreawiseProp...</h3>
        <label class="row"><input type="checkbox"><i></i>CityID</label>
        <label class="row"><input type="checkbox"><i></i>CountryID</label>
        <label class="row"><input type="checkbox"><i></i>PeriodKey</label>
        <label class="row"><input type="checkbox"><i></i>PropertyMe...</label>
        <label class="row"><input type="checkbox"><i></i>StateID</label>
        <label class="row"><input type="checkbox"><i></i>SuburbID</label>
        <h3 class="used"><svg class="up"><use href="#chev-up"/></svg><span class="tb"><svg width="13" height="12"><use href="#table"/></svg><em></em></span>FactSchool</h3>
        <label class="row"><input type="checkbox"><i></i>CountryId</label>
        <label class="row"><input type="checkbox"><i><svg><use href="#calc"/></svg></i>Distance</label>
        <label class="row"><input type="checkbox"><i><svg><use href="#calc-col"/></svg></i>ICSEA Group</label>
        <label class="row"><input type="checkbox"><i></i>ICSEAValue</label>
        <label class="row"><input type="checkbox"><i><svg><use href="#calc"/></svg></i>Kilometers</label>
        <label class="row"><input type="checkbox"><i><svg><use href="#globe"/></svg></i>Latitude</label>
        <label class="row"><input type="checkbox"><i></i>LevelOfSch...</label>
        <label class="row"><input type="checkbox"><i><svg><use href="#globe"/></svg></i>Longitude</label>
        <label class="row"><input type="checkbox"><i></i>SchoolCode</label>
        <label class="row"><input type="checkbox"><i></i>SchoolGen...</label>
        <label class="row"><input type="checkbox" checked><i></i>SchoolName</label>
        <label class="row"><input type="checkbox"><i></i>SchoolSpec...</label>
        <label class="row"><input type="checkbox"><i></i>SchoolSubT...</label>
        <label class="row"><input type="checkbox"><i></i>StateId</label>
        <label class="row"><input type="checkbox"><i></i>StreetName</label>
        <label class="row"><input type="checkbox"><i></i>StreetNum...</label>
        <label class="row"><input type="checkbox"><i></i>SuburbId</label>
        <h3><svg class="up"><use href="#chev-up"/></svg><span class="tb"><svg width="13" height="12"><use href="#table"/></svg></span>FactTransport</h3>
      </div>
      <div class="thumb"></div>
    </div>
  </aside>
</div>
<footer class="status"><span>Page 4 of 5</span><a href="#update">Update available (click to download)</a></footer>
</body>
</html>
```
FILE: styles.css
```css
* { box-sizing: border-box; }
body { margin: 0; height: 100vh; display: flex; flex-direction: column; overflow: hidden; background: #f3f2f1; color: #252423; font-family: "Open Sans", "Noto Sans", sans-serif; font-size: 11px; }
button { border: 0; padding: 0; background: none; font: inherit; color: inherit; display: flex; align-items: center; }
h2, h3 { margin: 0; font-weight: 400; font-size: inherit; }
svg { flex: none; display: block; }
.defs { position: absolute; width: 0; height: 0; }

/* Ribbon */
.ribbon { border-bottom: 2px solid #dfdedd; flex: none; }
.menu { display: flex; height: 35px; font-size: 13px; align-items: flex-start; }
.tab { height: 27px; margin-right: 32px; padding-bottom: 3px; }
.tab.file { margin: 2px 38px 0 18px; }
.tab.active { font-weight: 600; border-bottom: 3px solid #e8c42c; padding: 0; }
.tab:nth-child(6) { margin-right: 20px; }
.tab.context { background: #fff; color: #a38a2f; font-weight: 600; padding: 0 15px 3px; margin-right: 4px; }
.tools { display: flex; height: 37px; font-size: 13px; padding-bottom: 3px; }
.group { display: flex; justify-content: space-between; padding: 0 16px; border-right: 1px solid #d2d0ce; }
.group button { white-space: nowrap; }
.group button > svg:first-child { margin-right: 10px; }
.cv { width: 10px; height: 6px; margin-left: 7px; }
.clip { width: 98px; }
.clip button > svg:first-child { margin-right: 0; }
.clip .cv { margin-left: 4px; }
.data { min-width: 751px; padding-right: 7px; }
.data button:first-child { margin-right: -8px; }
.queries { min-width: 260px; }
.insert { min-width: 367px; padding-right: 7px; }
.calcs { min-width: 289px; }
.share { min-width: 106px; }
.collapse { margin: auto 4px 0 auto; height: 10px; }
.collapse path { stroke-width: 2; }

/* Frame */
.workspace { flex: 1; min-height: 0; display: flex; }
.rail { width: 37px; flex: none; border-right: 1px solid #d9d8d6; padding: 12px 8px; display: flex; flex-direction: column; gap: 24px; }
.rail button { height: 16px; }
.center { flex: 1; min-width: 0; display: flex; flex-direction: column; background: #fff; }
.canvas { height: 742px; flex: none; display: grid; grid-template-columns: 585fr 657fr; column-gap: 13px; padding-right: 62px; border-bottom: 2px dotted #484644; }
.canvas h2 { font-family: Roboto, sans-serif; }

/* Slicers */
.slicer { padding: 4px 13px; }
.slicer h2 { font-size: 15px; line-height: 22px; }
.slicer.first { height: 201px; padding-top: 5px; }
.node { display: flex; align-items: center; height: 19px; font-size: 13px; color: #605e5c; }
.node .ex { width: 14px; height: 8px; color: #c8c6c4; margin-right: 8px; }
.flip { transform: scaleY(-1); }
.node input { appearance: none; width: 14px; height: 14px; margin: 0 9px 0 0; background: #212121; }
.node.child { padding-left: 43px; }
.node.child input { margin-right: 8px; }
.visual-tools { display: flex; justify-content: flex-end; align-items: center; gap: 12px; height: 22px; padding: 0 5px; color: #605e5c; }
.slicer.selected { position: relative; height: 148px; border: 1px solid #bdbbb9; padding: 2px 12px; }
.h { position: absolute; border: 0 solid #979593; }
.tl, .tr, .bl, .br { width: 9px; height: 10px; }
.tl { top: -2px; left: -1px; border-width: 4px 0 0 3px; }
.tr { top: -2px; right: -2px; border-width: 4px 3px 0 0; }
.bl { bottom: -2px; left: -1px; border-width: 0 0 4px 3px; }
.br { bottom: -2px; right: -2px; border-width: 0 3px 4px 0; }
.tc, .bc { width: 12px; left: calc(50% - 6px); border-top-width: 4px; }
.tc { top: -2px; }
.bc { bottom: -2px; }
.ml, .mr { height: 12px; top: calc(50% - 6px); border-left-width: 3px; }
.ml { left: -1px; }
.mr { right: -2px; }

/* Map visuals */
.mapcard { padding: 0 4px 4px 5px; }
.mapcard h2 { font-size: 17px; line-height: 20px; }
.hovered { margin-top: 30px; border: 1px solid #e6e5e4; padding-left: 4px; }
.hovered h2 { padding-bottom: 3px; }
.second { margin-top: 67px; padding-right: 0; margin-right: -3px; }
.second h2 { padding-bottom: 5px; }
.map { position: relative; height: 260px; overflow: hidden; }
.map.tall { height: 278px; }
.tiles { width: 100%; height: 100%; }
.geo path { vector-effect: non-scaling-stroke; stroke-linejoin: round; }
.casing path { fill: none; }
.bld { fill: #e2dfda; stroke: #d6d2cc; }
.poi { fill: #33627c; font-size: 11px; paint-order: stroke; stroke: #ffffff99; stroke-width: 2px; }
.place, .road, .shield { text-anchor: middle; }
.place { fill: #7d6f6f; font-size: 12px; }
.end { text-anchor: end; }
.mid { text-anchor: middle; }
.road { fill: #6b6560; font-size: 9px; paint-order: stroke; stroke: #ffffffcc; stroke-width: 2px; }
.road.big { font-size: 14px; }
.mdm { font-size: 11px; }
.shield { fill: #5c9e31; font-size: 10px; font-weight: 700; }
.shield text { fill: #fff04a; }
.pt { fill: #4e9bf5; stroke: #0d4bb5; }
.bing { position: absolute; left: 5px; bottom: 8px; display: flex; align-items: center; gap: 3px; font-size: 14px; line-height: 18px; color: #000; }
.legal { position: absolute; right: 26px; bottom: 3px; font: 9px/13px "Liberation Sans", Arial, sans-serif; color: #252423; }
.legal a { color: #1a3f9c; margin-left: 4px; }

/* Page strip */
.pages { margin-top: auto; height: 36px; display: flex; background: #f3f2f1; border-bottom: 1px solid #dcdad8; color: #484644; }
.pager { width: 39px; display: flex; align-items: center; justify-content: space-between; padding: 0 7px 0 5px; border-right: 1px solid #a19f9d; }
.page { width: 77px; justify-content: center; border-right: 1px solid #c8c6c4; font-size: 12px; padding-top: 2px; }
.page:nth-last-child(2) { border-right: 0; }
.page.current { background: #fff; border-bottom: 2px solid #ecc51b; }
.add { width: 40px; background: #f2c811; margin: 2px 0 1px 1px; justify-content: center; }

/* Panes */
aside { flex: none; border-left: 1px solid #dcdad8; }
aside header { display: flex; align-items: center; height: 50px; }
aside header h2 { font-size: 14px; font-weight: 600; flex: 1; }
aside header button { color: #484644; }
.searchrow { height: 37px; padding: 2px 12px 5px 8px; border-bottom: 1px solid #bcbab8; }
.search { display: flex; align-items: center; height: 30px; padding-left: 10px; border: 1px solid #a6a4a2; border-radius: 2px; background: #fff; color: #484644; }
.search input { flex: 1; min-width: 0; border: 0; padding: 0 9px; background: none; font: inherit; font-size: 12px; outline: 0; }
.search input::placeholder { color: #3b3a39; }
.filters { width: 201px; background: #fff; border-left-color: #a6a4a2; }
.filters header { padding: 0 12px 4px; gap: 7px; }
.filters header button { margin-left: 14px; }
.filters section { padding: 17px 8px 25px; display: grid; gap: 6px; }
.filters section + section { padding-top: 1px; }
.filters h3 { display: flex; align-items: center; justify-content: space-between; height: 17px; margin-bottom: 2px; padding-right: 4px; color: #3b3a39; }
.filters h3 button { color: #8a8886; }
.card { height: 46px; border: 1px solid #bfbdbb; border-radius: 2px; background: #fff; padding: 0 8px; color: #3b3a39; flex-direction: column; align-items: flex-start; justify-content: center; line-height: 18px; }
.card.applied { background: #f3f2f1; }
.card.drop { display: flex; align-items: center; }

.viz { width: 182px; }
.viz header { padding: 0 12px 0 12px; color: #3b3a39; }
.gallery { display: grid; grid-template-columns: repeat(6, 16px); grid-auto-rows: 16px; gap: 8px 12px; padding: 4px 0 9px 10px; border-bottom: 1px solid #dcdad8; height: 145px; }
.gallery svg { width: 16px; height: 16px; overflow: visible; }
.picked { outline: 2px solid #484644; outline-offset: 1px; }
.b { fill: #83beec; stroke: #2273b4; }
.g { fill: #b3b0ad; stroke: #605e5c; }
.w { fill: #fff; stroke: #484644; }
.k { fill: none; stroke: #3b3a39; }
.l { fill: none; stroke: #2273b4; stroke-width: 1.2px; }
.ic { font-size: 15px; font-weight: 700; fill: #2b79b0; text-anchor: middle; }
.ic.n { font-size: 8px; font-weight: 400; }
.modes { display: flex; height: 37px; padding-left: 12px; align-items: flex-start; }
.modes button { width: 40px; height: 37px; justify-content: center; }
.modes .on { border-bottom: 4px solid #e8c42c; padding-top: 4px; }
.wells { padding: 0 7px 0 4px; }
.wells h3 { line-height: 26px; padding-left: 8px; color: #3b3a39; }
.well { background: #fff; border: 1px dashed #b3b0ad; padding: 3px 2px 7px; display: grid; gap: 2px; }
.chip { display: flex; align-items: center; height: 23px; border: 1px solid #bfbdbb; border-radius: 2px; background: #edebe9; padding: 0 4px; gap: 7px; color: #3b3a39; }
.chip button:first-of-type { margin-left: auto; }
.wells h2 { font-size: 14px; font-weight: 600; line-height: 20px; margin: 16px 10px 13px; color: #484644; }
.wells h3.opt { padding-left: 5px; line-height: 22px; }
.toggle { display: flex; align-items: center; gap: 4px; height: 36px; padding-left: 14px; color: #484644; }
.toggle + h3.opt { margin-top: 6px; }
.toggle input { appearance: none; width: 30px; height: 12px; margin: 0; display: flex; align-items: center; }
.toggle input::before { content: ""; box-sizing: border-box; width: 12px; height: 12px; border: 2px solid #605e5c; border-radius: 50%; }
.toggle input::after { content: ""; flex: 1; height: 2px; background: #605e5c; }
.toggle input:checked { flex-direction: row-reverse; }
.toggle input:checked::before { background: #605e5c; }
.well.empty { margin-top: 4px; height: 26px; padding: 0; place-content: center; }

.fields { width: 178px; display: flex; flex-direction: column; }
.fields header { padding: 0 7px 0 11px; color: #3b3a39; }
.fields .searchrow { padding: 2px 2px 5px 3px; border-bottom-color: #dcdad8; }
.list { position: relative; flex: 1; min-height: 0; overflow: hidden; margin-top: 8px; border-bottom: 1px solid #dcdad8; }
.rows { margin-top: -14px; }
.row { display: flex; align-items: center; height: 24px; padding-left: 31px; }
.row input { appearance: none; width: 12px; height: 12px; margin: 0; border: 1px solid #605e5c; border-radius: 2px; background: #faf9f8; }
.row input:checked { background: #f2c811; border-color: #f2c811; position: relative; }
.row input:checked::after { content: ""; position: absolute; left: 2px; top: 1px; width: 6px; height: 4px; border: solid #5c4a00; border-width: 0 0 1px 1px; transform: rotate(-45deg); }
.row i { width: 12px; height: 12px; margin: 0 9px 0 4px; }
.row i svg { width: 12px; height: 12px; }
.list h3 { display: flex; align-items: center; height: 34px; padding: 0 0 3px 3px; }
.list h3.used { font-weight: 600; }
.up { width: 12px; height: 7px; margin-right: 7px; }
.tb { position: relative; margin-right: 12px; padding-top: 2px; }
.tb em { position: absolute; left: 7px; top: 9px; width: 12px; height: 12px; border-radius: 50%; background: #f2c811; }
.tb em::after { content: ""; position: absolute; left: 4px; top: 3px; width: 5px; height: 3px; border: solid #4a3b00; border-width: 0 0 1px 1px; transform: rotate(-45deg); }
.thumb { position: absolute; right: 0; top: 220px; width: 4px; height: 429px; background: #cfcdcb; border-radius: 2px; }

.status { flex: none; height: 23px; display: flex; align-items: center; justify-content: space-between; padding: 2px 3px 0 1px; color: #484644; font-size: 12px; }
.status a { color: inherit; text-decoration: none; }
```
